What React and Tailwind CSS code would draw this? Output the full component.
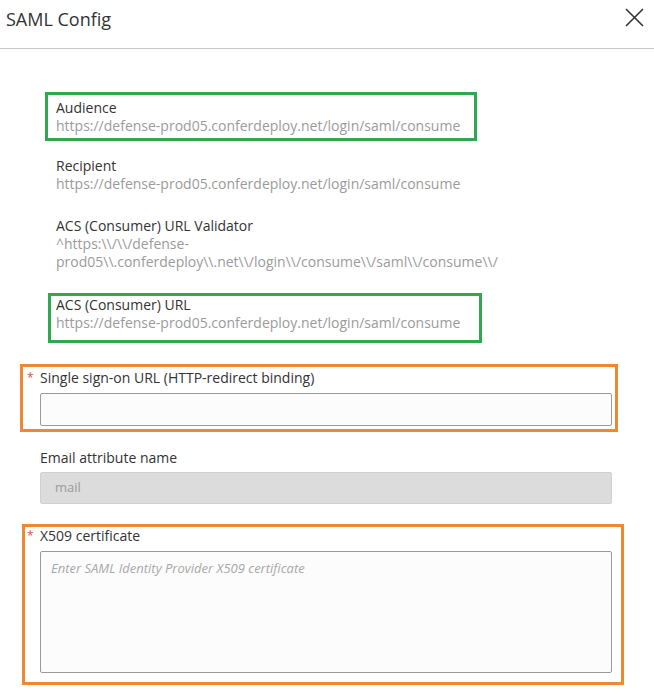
import React from "react"

const url = "https://defense-prod05.conferdeploy.net/login/saml/consume"

function Info({ label, children }) {
  return (
    <div className="text-[14px] leading-[18px]">
      <div className="text-[#333]">{label}</div>
      <div className="text-[#9b9b9b]">{children}</div>
    </div>
  )
}

export default function App() {
  return (
    <div className="w-[654px] h-[695px] bg-white overflow-hidden font-['Open_Sans',sans-serif]">
      <div className="h-[49px] border-b border-[#c5c9cd] flex justify-between items-start">
        <h1 className="pl-[6px] pt-[7px] text-[18px] leading-[24px] text-[#333]">SAML Config</h1>
        <button className="mt-[8px] mr-[10px] w-[19px] h-[19px]">
          <svg viewBox="0 0 19 19" width="19" height="19">
            <path d="M1 1L18 18M18 1L1 18" stroke="#333" strokeWidth="1.6" fill="none" />
          </svg>
        </button>
      </div>

      <div className="flex flex-col">
        <div className="mt-[43px] ml-[45px] w-[432px] border-[3px] border-[#2fa84f] pl-[8px] pt-[4px] pb-[3px]">
          <Info label="Audience">{url}</Info>
        </div>

        <div className="mt-[16px] ml-[56px]">
          <Info label="Recipient">{url}</Info>
        </div>

        <div className="mt-[24px] ml-[56px]">
          <Info label="ACS (Consumer) URL Validator">
            <span className="block">{"^https:\\\\/\\\\/defense-"}</span>
            <span className="block">{"prod05\\\\.conferdeploy\\\\.net\\\\/login\\\\/consume\\\\/saml\\\\/consume\\\\/"}</span>
          </Info>
        </div>

        <div className="mt-[22px] ml-[48px] w-[434px] border-[3px] border-[#2fa84f] pl-[5px] pb-[8px]">
          <Info label="ACS (Consumer) URL">{url}</Info>
        </div>

        <div className="mt-[21px] ml-[20px] w-[598px] border-[3px] border-[#ef8833] pt-[2px] pb-[3px]">
          <div className="flex text-[14px] leading-[18px] text-[#333]">
            <span className="w-[17px] pl-[4px] text-[12px] text-[#d9534f]">*</span>
            <span>Single sign-on URL (HTTP-redirect binding)</span>
          </div>
          <input
            type="text"
            className="mt-[6px] ml-[17px] block w-[572px] h-[33px] border border-[#9a9a9a] rounded-[2px] bg-[#fcfcfc] px-[10px] text-[13px] outline-none"
          />
        </div>

        <div className="mt-[17px] ml-[40px] text-[14px] leading-[18px] text-[#333]">Email attribute name</div>
        <div className="mt-[5px] ml-[40px] w-[572px] h-[32px] border border-[#d0d0d0] rounded-[2px] bg-[#dcdcdc] pl-[14px] flex items-center text-[13px] text-[#9b9b9b]">
          mail
        </div>

        <div className="mt-[20px] ml-[22px] w-[602px] border-[3px] border-[#ef8833] pb-[9px]">
          <div className="flex text-[14px] leading-[18px] text-[#333]">
            <span className="w-[15px] pl-[2px] text-[12px] text-[#d9534f]">*</span>
            <span>X509 certificate</span>
          </div>
          <textarea
            placeholder="Enter SAML Identity Provider X509 certificate"
            className="mt-[6px] ml-[15px] block w-[572px] h-[122px] border border-[#9a9a9a] rounded-[2px] bg-[#fcfcfd] px-[10px] py-[7px] text-[13px] leading-[18px] italic placeholder:text-[#a8a8a8] resize-none outline-none"
          />
        </div>
      </div>
    </div>
  )
}
